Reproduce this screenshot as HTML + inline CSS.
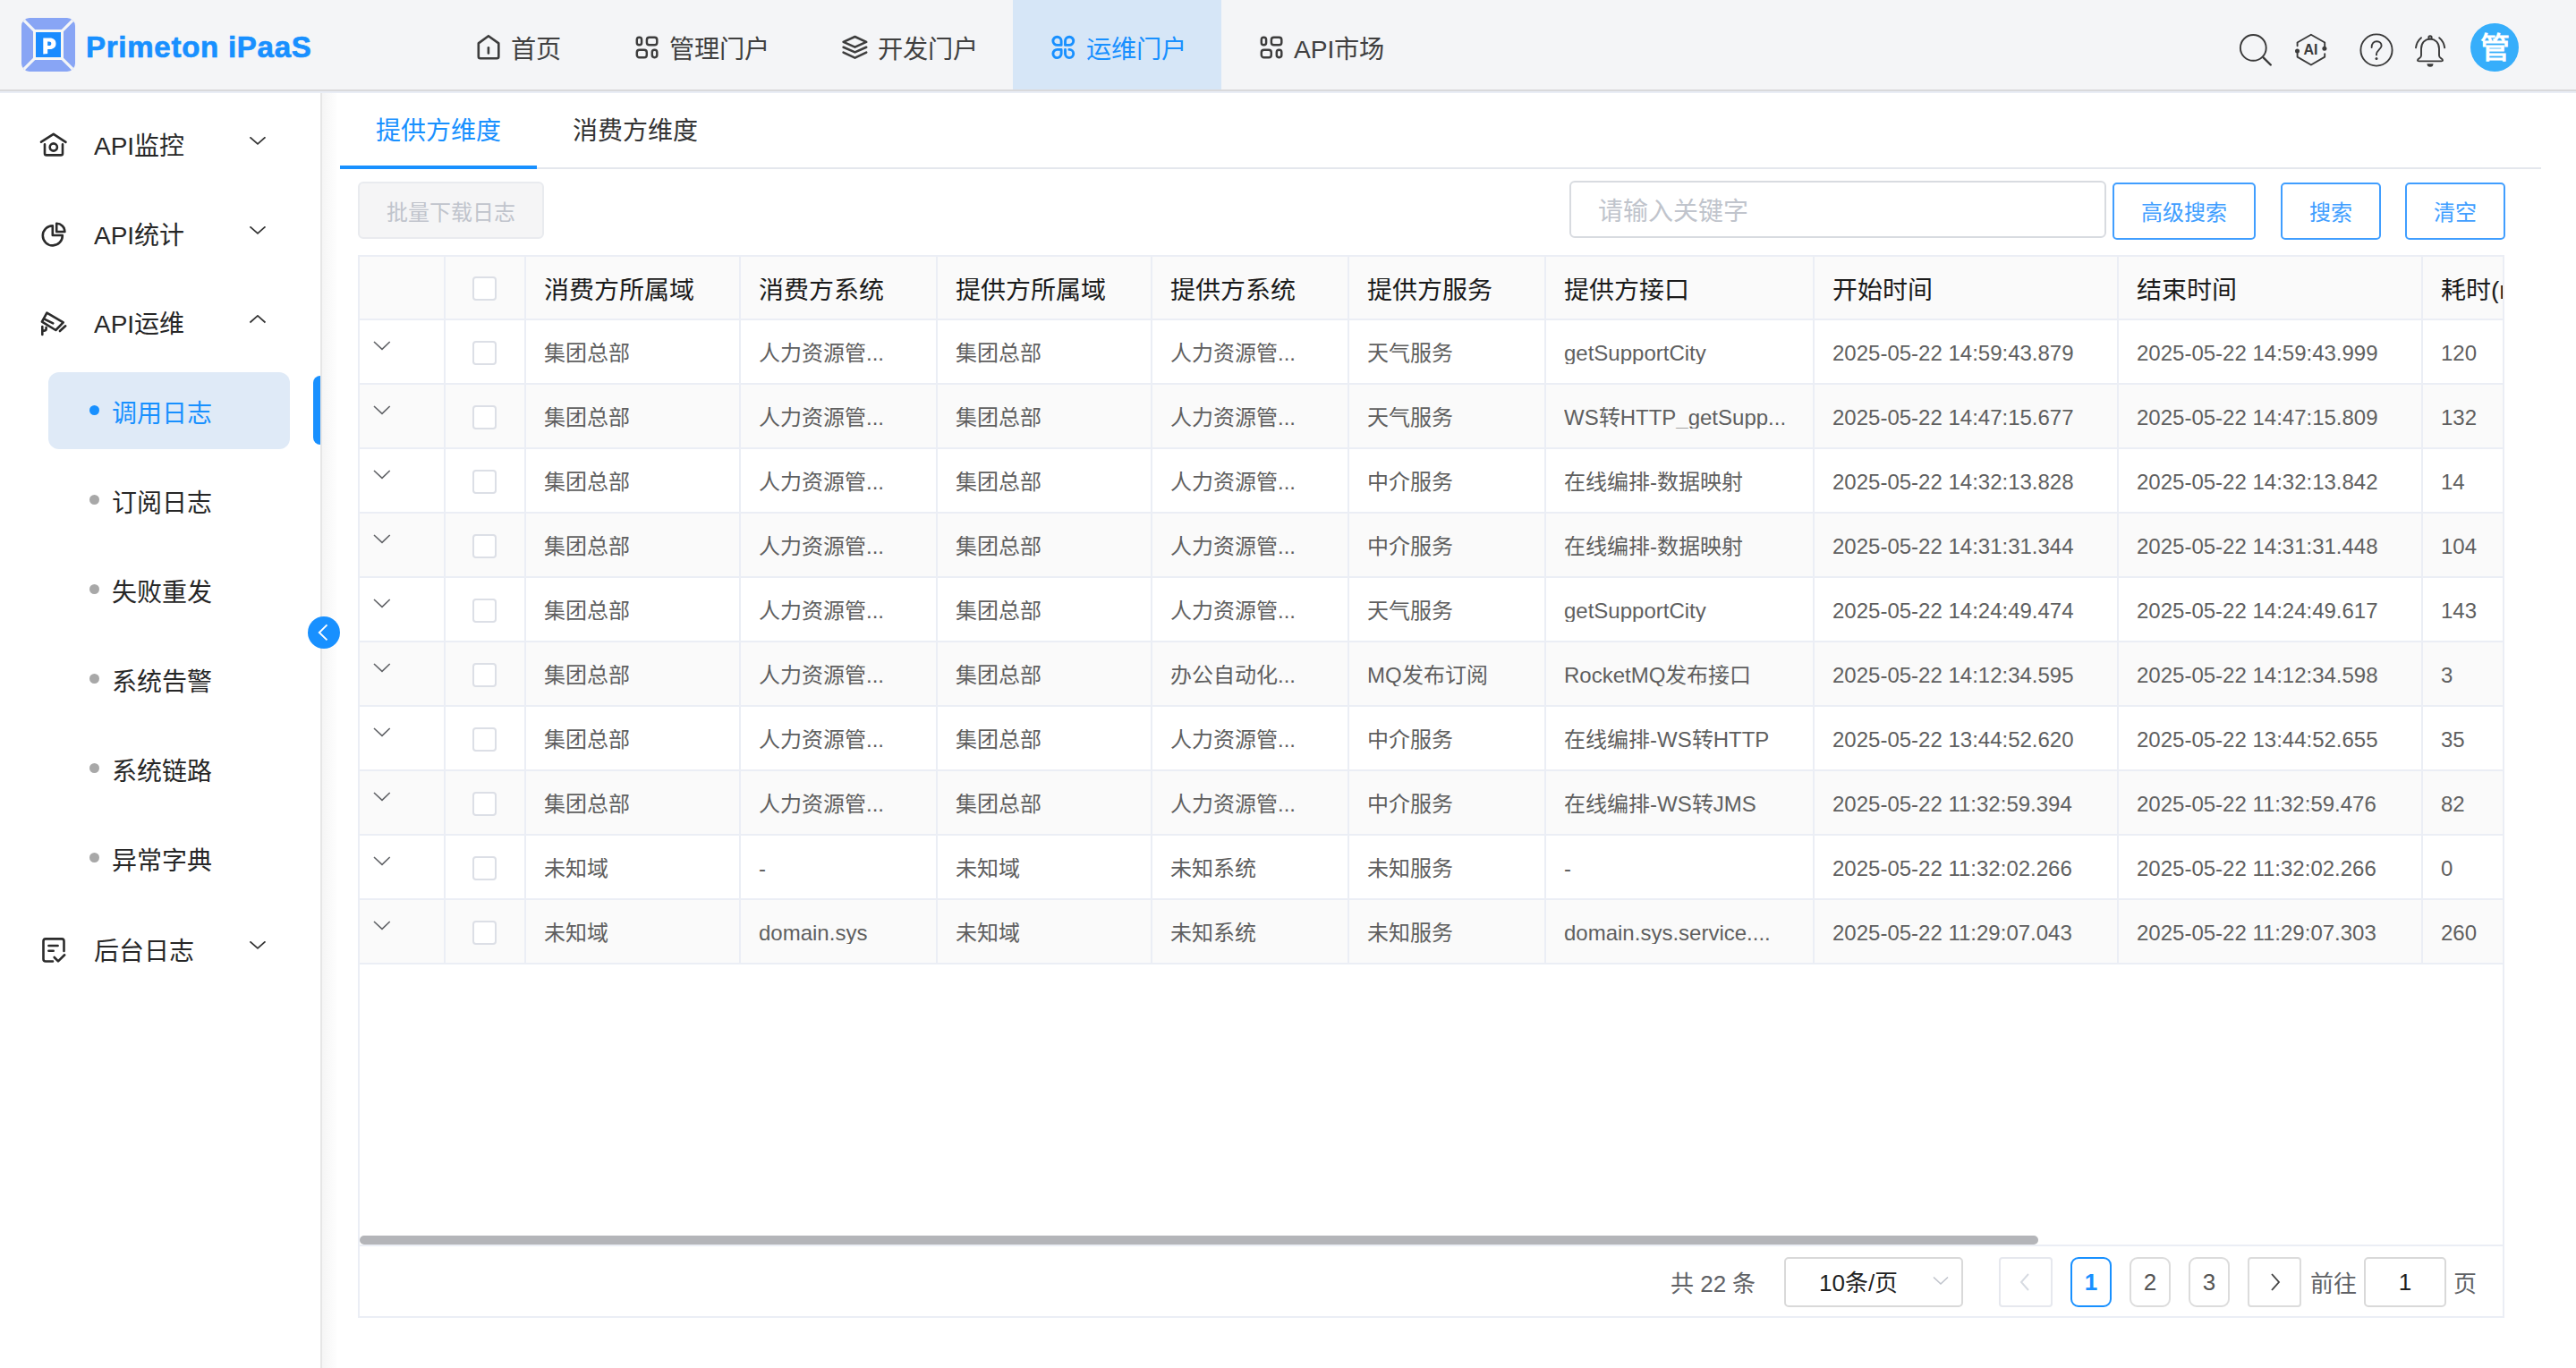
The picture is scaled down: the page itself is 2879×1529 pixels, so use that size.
<!DOCTYPE html><html lang="zh-CN"><head><meta charset="utf-8"><title>Primeton iPaaS</title><style>
*{box-sizing:border-box;margin:0;padding:0}
html,body{width:2879px;height:1529px;overflow:hidden;background:#fff}
body{font-family:"Liberation Sans",sans-serif;color:#333;position:relative}
.abs{position:absolute}
#hdr{left:0;top:0;width:2879px;height:102px;background:#f4f5f7;border-bottom:2px solid #d9d9db;box-shadow:0 2px 0 #e9edf5;z-index:2}
.nav{position:absolute;top:2px;height:100px;display:flex;align-items:center;font-size:28.2px;color:#404040;white-space:nowrap}
.nav svg{position:absolute}
#side{left:0;top:102px;width:360px;height:1427px;background:#fff;border-right:2px solid #e6e6e6}
#shadow{left:360px;top:102px;width:18px;height:1427px;background:linear-gradient(to right,#f5f5f5,rgba(255,255,255,0))}
.mi{position:absolute;left:105px;margin-top:2px;font-size:28px;color:#262626;line-height:28px;white-space:nowrap}
.si{position:absolute;left:125px;margin-top:2px;font-size:28px;color:#262626;line-height:28px;white-space:nowrap}
.dot{position:absolute;left:100px;width:11px;height:11px;border-radius:50%;background:#a8a8a8}
.cell{position:absolute;white-space:nowrap;overflow:hidden}
.ht{font-size:28px;color:#1b1b1b;line-height:28px}
.rt{font-size:24px;color:#5f5f5f;line-height:24px}
.vl{position:absolute;width:2px;background:#ebeef5}
.hl{position:absolute;height:2px;background:#ebeef5}
.cb{position:absolute;left:528px;width:27px;height:27px;border:2px solid #dcdfe6;border-radius:4px;background:#fff}
.btn{position:absolute;top:204px;height:64px;padding-bottom:2px;border:2px solid #409eff;border-radius:5px;color:#409eff;font-size:24px;display:flex;align-items:center;justify-content:center;background:#fff}
.pg{position:absolute;top:1405px;height:56px;border:2px solid #dcdcdc;border-radius:9px;display:flex;align-items:center;justify-content:center;font-size:26px;color:#555;background:#fff}
</style></head><body>
<div id="hdr" class="abs">
<svg class="abs" style="left:24px;top:20px" width="60" height="60" viewBox="0 0 60 60">
<defs><clipPath id="lc"><rect x="0" y="0" width="60" height="60" rx="9"/></clipPath></defs>
<g clip-path="url(#lc)"><rect x="0" y="0" width="60" height="60" fill="#88a5f5"/>
<line x1="0" y1="0" x2="60" y2="60" stroke="#f4f5f7" stroke-width="3.2"/>
<line x1="60" y1="0" x2="0" y2="60" stroke="#f4f5f7" stroke-width="3.2"/></g>
<rect x="13" y="13" width="34" height="34" fill="#f7f7f5"/>
<rect x="16" y="16" width="28" height="28" fill="#1a8cff"/>
<path d="M24.3 22.6h7.2c4.6 0 7 2.3 7 6.1c0 3.9-2.6 6.3-6.7 6.3h-2.6v5l-4.9 0.6zM29.2 26.5v4.6h1.7c1.4 0 2.4-0.8 2.4-2.3c0-1.5-0.9-2.3-2.4-2.3z" fill="#fff"/>
</svg>
<div class="abs" style="left:96px;top:33px;font-size:33px;font-weight:bold;color:#1890ff;line-height:40px;white-space:nowrap;letter-spacing:0.75px;-webkit-text-stroke:0.7px #1890ff">Primeton iPaaS</div>
<div class="abs" style="left:1132px;top:0;width:233px;height:100px;background:#d6e6f7"></div>
<svg class="abs" style="left:526px;top:32px" width="40" height="40" viewBox="0 0 40 40"><path d="M8.8 16.4 L19.9 8.2 L31.3 16.4 V31.3 Q31.3 33.3 29.3 33.3 H10.8 Q8.8 33.3 8.8 31.3 Z" fill="none" stroke="#3d3d3d" stroke-width="2.6" stroke-linecap="round" stroke-linejoin="round"/><path d="M19.9 21.3 V27.5" fill="none" stroke="#3d3d3d" stroke-width="2.6" stroke-linecap="round" stroke-linejoin="round"/></svg>
<div class="nav" style="left:571px">首页</div>
<svg class="abs" style="left:703px;top:32px" width="40" height="40" viewBox="0 0 40 40"><rect x="8.8" y="9.7" width="5.3" height="8.6" rx="2.6" fill="none" stroke="#3d3d3d" stroke-width="2.45"/><rect x="19.9" y="9.7" width="11.4" height="8.6" rx="2.8" fill="none" stroke="#3d3d3d" stroke-width="2.45"/><rect x="8.8" y="23.7" width="11" height="8.5" rx="2.8" fill="none" stroke="#3d3d3d" stroke-width="2.45"/><rect x="25.8" y="23.7" width="5.5" height="8.5" rx="2.6" fill="none" stroke="#3d3d3d" stroke-width="2.45"/></svg>
<div class="nav" style="left:748px">管理门户</div>
<svg class="abs" style="left:935px;top:32px" width="40" height="40" viewBox="0 0 40 40"><path d="M20.5 9 L33.2 14.9 L20.5 20.6 L7.6 14.9 Z" fill="none" stroke="#3d3d3d" stroke-width="2.6" stroke-linecap="round" stroke-linejoin="round"/><path d="M7.6 20.8 L20.5 26.4 L33.2 20.8" fill="none" stroke="#3d3d3d" stroke-width="2.6" stroke-linecap="round" stroke-linejoin="round"/><path d="M7.6 26.6 L20.5 32.6 L33.2 26.6" fill="none" stroke="#3d3d3d" stroke-width="2.6" stroke-linecap="round" stroke-linejoin="round"/></svg>
<div class="nav" style="left:981px">开发门户</div>
<svg class="abs" style="left:1168px;top:32px" width="40" height="40" viewBox="0 0 40 40">
<path d="M18.1 18.4 H13.7 A4.6 4.6 0 1 1 18.1 13.8 Z" fill="none" stroke="#1890ff" stroke-width="2.9" stroke-linejoin="round"/>
<path d="M22.5 18.4 H26.9 A4.6 4.6 0 1 0 22.5 13.8 Z" fill="none" stroke="#1890ff" stroke-width="2.9" stroke-linejoin="round"/>
<path d="M18.1 23.4 H13.7 A4.6 4.6 0 1 0 18.1 28 Z" fill="none" stroke="#1890ff" stroke-width="2.9" stroke-linejoin="round"/>
<path d="M22.5 23.4 V28 A4.6 4.6 0 1 0 27.1 23.4 H26.9" fill="none" stroke="#1890ff" stroke-width="2.9" stroke-linejoin="round" stroke-linecap="round"/>
</svg>
<div class="nav" style="left:1214px;color:#1890ff">运维门户</div>
<svg class="abs" style="left:1401px;top:32px" width="40" height="40" viewBox="0 0 40 40"><rect x="8.8" y="9.7" width="5.3" height="8.6" rx="2.6" fill="none" stroke="#3d3d3d" stroke-width="2.45"/><rect x="19.9" y="9.7" width="11.4" height="8.6" rx="2.8" fill="none" stroke="#3d3d3d" stroke-width="2.45"/><rect x="8.8" y="23.7" width="11" height="8.5" rx="2.8" fill="none" stroke="#3d3d3d" stroke-width="2.45"/><rect x="25.8" y="23.7" width="5.5" height="8.5" rx="2.6" fill="none" stroke="#3d3d3d" stroke-width="2.45"/></svg>
<div class="nav" style="left:1446px">API市场</div>
<svg class="abs" style="left:2496px;top:30px" width="50" height="50" viewBox="0 0 50 50"><circle cx="22.3" cy="23.4" r="14.4" fill="none" stroke="#3a3a3a" stroke-width="1.9" stroke-linecap="round" stroke-linejoin="round"/><path d="M33.6 34.3 L41.8 42.5" fill="none" stroke="#3a3a3a" stroke-width="2.4" stroke-linecap="round"/></svg>
<svg class="abs" style="left:2558px;top:30px" width="50" height="50" viewBox="0 0 50 50">
<path d="M9.6 21.2 V17.5 L24.9 8.7 L40.2 17.5 V22.2" fill="none" stroke="#3a3a3a" stroke-width="1.9" stroke-linecap="round" stroke-linejoin="round"/>
<path d="M40.2 30.2 V33.6 L24.9 42.5 L9.6 33.6 V28.2" fill="none" stroke="#3a3a3a" stroke-width="1.9" stroke-linecap="round" stroke-linejoin="round"/>
<circle cx="39.9" cy="24.2" r="2.5" fill="#3a3a3a"/><circle cx="9.5" cy="27" r="2.5" fill="#3a3a3a"/>
<text x="24.5" y="30.8" text-anchor="middle" font-family="Liberation Sans" font-weight="bold" font-size="16" fill="#3a3a3a">AI</text>
</svg>
<svg class="abs" style="left:2630px;top:30px" width="50" height="50" viewBox="0 0 50 50">
<circle cx="26" cy="26" r="17.6" fill="none" stroke="#3a3a3a" stroke-width="1.9" stroke-linecap="round" stroke-linejoin="round"/>
<path d="M20.6 23 C20.6 18.6 23.2 16.3 26.4 16.3 C29.6 16.3 31.6 18.4 31.6 21.2 C31.6 24.6 26 26.4 26 30.6 V31.4" fill="none" stroke="#3a3a3a" stroke-width="1.9" stroke-linecap="round" stroke-linejoin="round" stroke-width="2.1"/>
<circle cx="26" cy="35.6" r="1.5" fill="#3a3a3a"/>
</svg>
<svg class="abs" style="left:2692px;top:30px" width="50" height="50" viewBox="0 0 50 50">
<path d="M24 13.6 C18 13.6 14 18.2 14 24.4 V32 C14 33.6 13 34.6 11.6 35.4 C9.6 36.6 9.4 38.4 11.6 38.4 H36.4 C38.6 38.4 38.4 36.6 36.4 35.4 C35 34.6 34 33.6 34 32 V24.4 C34 18.2 30 13.6 24 13.6 Z" fill="none" stroke="#3a3a3a" stroke-width="1.9" stroke-linecap="round" stroke-linejoin="round"/>
<circle cx="24" cy="11.9" r="1.7" fill="none" stroke="#3a3a3a" stroke-width="1.9" stroke-linecap="round" stroke-linejoin="round"/>
<path d="M20.5 41.2 H27.5 A3.5 3.5 0 0 1 20.5 41.2 Z" fill="#3a3a3a"/>
<path d="M14 12.2 C10.6 15 8.6 18.6 8 23.4" fill="none" stroke="#3a3a3a" stroke-width="1.9" stroke-linecap="round" stroke-linejoin="round"/><path d="M34.2 12.2 C37.6 15 39.6 18.6 40.2 23.4" fill="none" stroke="#3a3a3a" stroke-width="1.9" stroke-linecap="round" stroke-linejoin="round"/>
</svg>
<div class="abs" style="left:2761px;top:26px;width:54px;height:54px;border-radius:50%;background:#36aefb;color:#fff;font-size:33px;font-weight:bold;display:flex;align-items:center;justify-content:center;line-height:1">管</div>
</div>
<div id="side" class="abs"></div><div id="shadow" class="abs"></div>
<svg class="abs" style="left:36px;top:140px" width="50" height="45" viewBox="0 0 50 45"><path d="M10 18.7 L23.8 9.9 L37.5 18.9" fill="none" stroke="#2b2b2b" stroke-width="2.6" stroke-linecap="round" stroke-linejoin="round"/><path d="M14 21.4 V31.4 Q14 33.4 16 33.4 H32 Q34 33.4 34 31.4 V21.4" fill="none" stroke="#2b2b2b" stroke-width="2.6" stroke-linecap="round" stroke-linejoin="round"/><circle cx="23.8" cy="24.5" r="4.1" fill="none" stroke="#2b2b2b" stroke-width="2.6" stroke-linecap="round" stroke-linejoin="round" stroke-width="2.4"/></svg>
<div class="mi" style="top:148px">API监控</div>
<svg class="abs" style="left:36px;top:240px" width="50" height="45" viewBox="0 0 50 45"><path d="M22.8 12.4 A11 11 0 1 0 33.8 23 H22.8 Z" fill="none" stroke="#2b2b2b" stroke-width="2.6" stroke-linecap="round" stroke-linejoin="round" stroke-linecap="butt" stroke-linejoin="miter"/><path d="M27.2 9.8 V19 H36.4 A9.2 9.2 0 0 0 27.2 9.8 Z" fill="none" stroke="#2b2b2b" stroke-width="2.6" stroke-linecap="round" stroke-linejoin="round" stroke-linecap="butt" stroke-linejoin="miter"/></svg>
<div class="mi" style="top:248px">API统计</div>
<svg class="abs" style="left:36px;top:340px" width="50" height="45" viewBox="0 0 50 45"><path d="M16.4 9.6 L34.7 20.4 L26.3 29 L10.9 19.7 Z" fill="none" stroke="#2b2b2b" stroke-width="2.6" stroke-linecap="round" stroke-linejoin="round"/><path d="M13.6 16.6 L23.3 21.3" fill="none" stroke="#2b2b2b" stroke-width="2.6" stroke-linecap="round" stroke-linejoin="round"/><path d="M30.9 30 L37.2 24.3" fill="none" stroke="#2b2b2b" stroke-width="2.6" stroke-linecap="round" stroke-linejoin="round"/><path d="M11.3 25 V34" fill="none" stroke="#2b2b2b" stroke-width="2.6" stroke-linecap="round" stroke-linejoin="round"/><path d="M11.3 29.6 H13.6 Q15.6 29.6 15.6 27.6 V26" fill="none" stroke="#2b2b2b" stroke-width="2.6" stroke-linecap="round" stroke-linejoin="round"/></svg>
<div class="mi" style="top:347px">API运维</div>
<svg class="abs" style="left:276px;top:153px" width="24" height="12" viewBox="0 0 24 12"><path d="M3.4 0.3 L12 7.9 L20.5 0.3" fill="none" stroke="#333" stroke-width="1.7"/></svg>
<svg class="abs" style="left:276px;top:253px" width="24" height="12" viewBox="0 0 24 12"><path d="M3.4 0.3 L12 7.9 L20.5 0.3" fill="none" stroke="#333" stroke-width="1.7"/></svg>
<svg class="abs" style="left:276px;top:352px" width="24" height="12" viewBox="0 0 24 12"><path d="M3.4 8.5 L12 0.9 L20.5 8.5" fill="none" stroke="#333" stroke-width="1.7"/></svg>
<svg class="abs" style="left:276px;top:1052px" width="24" height="12" viewBox="0 0 24 12"><path d="M3.4 0.3 L12 7.9 L20.5 0.3" fill="none" stroke="#333" stroke-width="1.7"/></svg>
<div class="abs" style="left:54px;top:416px;width:270px;height:86px;border-radius:12px;background:#dfeaf7"></div>
<div class="abs" style="left:350px;top:420px;width:8px;height:77px;border-radius:8px 0 0 8px;background:#1890ff"></div>
<div class="dot" style="top:453px;background:#1890ff"></div>
<div class="si" style="top:447px;color:#1890ff">调用日志</div>
<div class="dot" style="top:553px"></div>
<div class="si" style="top:547px">订阅日志</div>
<div class="dot" style="top:653px"></div>
<div class="si" style="top:647px">失败重发</div>
<div class="dot" style="top:753px"></div>
<div class="si" style="top:747px">系统告警</div>
<div class="dot" style="top:853px"></div>
<div class="si" style="top:847px">系统链路</div>
<div class="dot" style="top:953px"></div>
<div class="si" style="top:947px">异常字典</div>
<svg class="abs" style="left:36px;top:1040px" width="50" height="45" viewBox="0 0 50 45"><path d="M23 34.5 H15 Q12.5 34.5 12.5 32 V11.9 Q12.5 9.4 15 9.4 H33 Q35.5 9.4 35.5 11.9 V23" fill="none" stroke="#2b2b2b" stroke-width="2.6" stroke-linecap="round" stroke-linejoin="round"/><path d="M18.4 17 H28.6" fill="none" stroke="#2b2b2b" stroke-width="2.6" stroke-linecap="round" stroke-linejoin="round"/><path d="M18.4 22.7 H23.7" fill="none" stroke="#2b2b2b" stroke-width="2.6" stroke-linecap="round" stroke-linejoin="round"/><path d="M24.7 30 L29 34.4 L36.2 27.3" fill="none" stroke="#2b2b2b" stroke-width="2.6" stroke-linecap="round" stroke-linejoin="round"/></svg>
<div class="mi" style="top:1048px">后台日志</div>
<svg class="abs" style="left:344px;top:689px" width="36" height="36" viewBox="0 0 36 36"><circle cx="18" cy="18" r="18" fill="#1890ff"/><path d="M21.5 9.4 L12.8 18 L21.5 26.4" fill="none" stroke="#fff" stroke-width="1.9"/></svg>
<div class="abs" style="left:420px;top:133px;font-size:28px;line-height:28px;color:#1890ff;white-space:nowrap">提供方维度</div>
<div class="abs" style="left:640px;top:133px;font-size:28px;line-height:28px;color:#333;white-space:nowrap">消费方维度</div>
<div class="hl" style="left:380px;top:187px;width:2460px;background:#e4e7ed"></div>
<div class="abs" style="left:380px;top:185px;width:220px;height:4px;background:#1890ff"></div>
<div class="abs" style="left:400px;top:203px;width:208px;height:64px;border:2px solid #e9ebef;border-radius:6px;background:#f5f5f6;color:#c0c4cc;font-size:24px;display:flex;align-items:center;justify-content:center">批量下载日志</div>
<div class="abs" style="left:1754px;top:202px;width:600px;height:64px;border:2px solid #d8dbe0;border-radius:6px;background:#fff"></div>
<div class="abs" style="left:1786px;top:223px;font-size:28px;line-height:28px;color:#c0c4cc;white-space:nowrap">请输入关键字</div>
<div class="btn" style="left:2361px;width:160px">高级搜索</div>
<div class="btn" style="left:2549px;width:112px">搜索</div>
<div class="btn" style="left:2688px;width:112px">清空</div>
<div class="abs" style="left:400px;top:285px;width:2399px;height:1188px;border:2px solid #ebeef5;border-right:none"></div>
<div class="vl" style="left:2797px;top:285px;height:1187px"></div>
<div class="abs" style="left:402px;top:287px;width:2395px;height:70px;background:#fafafa"></div>
<div class="abs" style="left:402px;top:429px;width:2395px;height:72px;background:#fafafa"></div>
<div class="abs" style="left:402px;top:573px;width:2395px;height:72px;background:#fafafa"></div>
<div class="abs" style="left:402px;top:717px;width:2395px;height:72px;background:#fafafa"></div>
<div class="abs" style="left:402px;top:861px;width:2395px;height:72px;background:#fafafa"></div>
<div class="abs" style="left:402px;top:1005px;width:2395px;height:72px;background:#fafafa"></div>
<div class="hl" style="left:400px;top:356px;width:2399px"></div>
<div class="hl" style="left:400px;top:428px;width:2399px"></div>
<div class="hl" style="left:400px;top:500px;width:2399px"></div>
<div class="hl" style="left:400px;top:572px;width:2399px"></div>
<div class="hl" style="left:400px;top:644px;width:2399px"></div>
<div class="hl" style="left:400px;top:716px;width:2399px"></div>
<div class="hl" style="left:400px;top:788px;width:2399px"></div>
<div class="hl" style="left:400px;top:860px;width:2399px"></div>
<div class="hl" style="left:400px;top:932px;width:2399px"></div>
<div class="hl" style="left:400px;top:1004px;width:2399px"></div>
<div class="hl" style="left:400px;top:1076px;width:2399px"></div>
<div class="vl" style="left:496px;top:285px;height:792px"></div>
<div class="vl" style="left:586px;top:285px;height:792px"></div>
<div class="vl" style="left:826px;top:285px;height:792px"></div>
<div class="vl" style="left:1046px;top:285px;height:792px"></div>
<div class="vl" style="left:1286px;top:285px;height:792px"></div>
<div class="vl" style="left:1506px;top:285px;height:792px"></div>
<div class="vl" style="left:1726px;top:285px;height:792px"></div>
<div class="vl" style="left:2026px;top:285px;height:792px"></div>
<div class="vl" style="left:2366px;top:285px;height:792px"></div>
<div class="vl" style="left:2706px;top:285px;height:792px"></div>
<div class="cb" style="top:309px"></div>
<div class="cell ht" style="left:608px;top:311px;width:218px">消费方所属域</div>
<div class="cell ht" style="left:848px;top:311px;width:198px">消费方系统</div>
<div class="cell ht" style="left:1068px;top:311px;width:218px">提供方所属域</div>
<div class="cell ht" style="left:1308px;top:311px;width:198px">提供方系统</div>
<div class="cell ht" style="left:1528px;top:311px;width:198px">提供方服务</div>
<div class="cell ht" style="left:1748px;top:311px;width:278px">提供方接口</div>
<div class="cell ht" style="left:2048px;top:311px;width:318px">开始时间</div>
<div class="cell ht" style="left:2388px;top:311px;width:318px">结束时间</div>
<div class="cell ht" style="left:2728px;top:311px;width:69px">耗时(ms)</div>
<svg class="abs" style="left:414px;top:379px" width="26" height="14" viewBox="0 0 26 14"><path d="M4 3 L13 11.4 L21.7 3" fill="none" stroke="#606266" stroke-width="1.6"/></svg>
<div class="cb" style="top:381px"></div>
<div class="cell rt" style="left:608px;top:383px;width:218px">集团总部</div>
<div class="cell rt" style="left:848px;top:383px;width:198px">人力资源管...</div>
<div class="cell rt" style="left:1068px;top:383px;width:218px">集团总部</div>
<div class="cell rt" style="left:1308px;top:383px;width:198px">人力资源管...</div>
<div class="cell rt" style="left:1528px;top:383px;width:198px">天气服务</div>
<div class="cell rt" style="left:1748px;top:383px;width:278px">getSupportCity</div>
<div class="cell rt" style="left:2048px;top:383px;width:318px">2025-05-22 14:59:43.879</div>
<div class="cell rt" style="left:2388px;top:383px;width:318px">2025-05-22 14:59:43.999</div>
<div class="cell rt" style="left:2728px;top:383px;width:69px">120</div>
<svg class="abs" style="left:414px;top:451px" width="26" height="14" viewBox="0 0 26 14"><path d="M4 3 L13 11.4 L21.7 3" fill="none" stroke="#606266" stroke-width="1.6"/></svg>
<div class="cb" style="top:453px"></div>
<div class="cell rt" style="left:608px;top:455px;width:218px">集团总部</div>
<div class="cell rt" style="left:848px;top:455px;width:198px">人力资源管...</div>
<div class="cell rt" style="left:1068px;top:455px;width:218px">集团总部</div>
<div class="cell rt" style="left:1308px;top:455px;width:198px">人力资源管...</div>
<div class="cell rt" style="left:1528px;top:455px;width:198px">天气服务</div>
<div class="cell rt" style="left:1748px;top:455px;width:278px">WS转HTTP_getSupp...</div>
<div class="cell rt" style="left:2048px;top:455px;width:318px">2025-05-22 14:47:15.677</div>
<div class="cell rt" style="left:2388px;top:455px;width:318px">2025-05-22 14:47:15.809</div>
<div class="cell rt" style="left:2728px;top:455px;width:69px">132</div>
<svg class="abs" style="left:414px;top:523px" width="26" height="14" viewBox="0 0 26 14"><path d="M4 3 L13 11.4 L21.7 3" fill="none" stroke="#606266" stroke-width="1.6"/></svg>
<div class="cb" style="top:525px"></div>
<div class="cell rt" style="left:608px;top:527px;width:218px">集团总部</div>
<div class="cell rt" style="left:848px;top:527px;width:198px">人力资源管...</div>
<div class="cell rt" style="left:1068px;top:527px;width:218px">集团总部</div>
<div class="cell rt" style="left:1308px;top:527px;width:198px">人力资源管...</div>
<div class="cell rt" style="left:1528px;top:527px;width:198px">中介服务</div>
<div class="cell rt" style="left:1748px;top:527px;width:278px">在线编排-数据映射</div>
<div class="cell rt" style="left:2048px;top:527px;width:318px">2025-05-22 14:32:13.828</div>
<div class="cell rt" style="left:2388px;top:527px;width:318px">2025-05-22 14:32:13.842</div>
<div class="cell rt" style="left:2728px;top:527px;width:69px">14</div>
<svg class="abs" style="left:414px;top:595px" width="26" height="14" viewBox="0 0 26 14"><path d="M4 3 L13 11.4 L21.7 3" fill="none" stroke="#606266" stroke-width="1.6"/></svg>
<div class="cb" style="top:597px"></div>
<div class="cell rt" style="left:608px;top:599px;width:218px">集团总部</div>
<div class="cell rt" style="left:848px;top:599px;width:198px">人力资源管...</div>
<div class="cell rt" style="left:1068px;top:599px;width:218px">集团总部</div>
<div class="cell rt" style="left:1308px;top:599px;width:198px">人力资源管...</div>
<div class="cell rt" style="left:1528px;top:599px;width:198px">中介服务</div>
<div class="cell rt" style="left:1748px;top:599px;width:278px">在线编排-数据映射</div>
<div class="cell rt" style="left:2048px;top:599px;width:318px">2025-05-22 14:31:31.344</div>
<div class="cell rt" style="left:2388px;top:599px;width:318px">2025-05-22 14:31:31.448</div>
<div class="cell rt" style="left:2728px;top:599px;width:69px">104</div>
<svg class="abs" style="left:414px;top:667px" width="26" height="14" viewBox="0 0 26 14"><path d="M4 3 L13 11.4 L21.7 3" fill="none" stroke="#606266" stroke-width="1.6"/></svg>
<div class="cb" style="top:669px"></div>
<div class="cell rt" style="left:608px;top:671px;width:218px">集团总部</div>
<div class="cell rt" style="left:848px;top:671px;width:198px">人力资源管...</div>
<div class="cell rt" style="left:1068px;top:671px;width:218px">集团总部</div>
<div class="cell rt" style="left:1308px;top:671px;width:198px">人力资源管...</div>
<div class="cell rt" style="left:1528px;top:671px;width:198px">天气服务</div>
<div class="cell rt" style="left:1748px;top:671px;width:278px">getSupportCity</div>
<div class="cell rt" style="left:2048px;top:671px;width:318px">2025-05-22 14:24:49.474</div>
<div class="cell rt" style="left:2388px;top:671px;width:318px">2025-05-22 14:24:49.617</div>
<div class="cell rt" style="left:2728px;top:671px;width:69px">143</div>
<svg class="abs" style="left:414px;top:739px" width="26" height="14" viewBox="0 0 26 14"><path d="M4 3 L13 11.4 L21.7 3" fill="none" stroke="#606266" stroke-width="1.6"/></svg>
<div class="cb" style="top:741px"></div>
<div class="cell rt" style="left:608px;top:743px;width:218px">集团总部</div>
<div class="cell rt" style="left:848px;top:743px;width:198px">人力资源管...</div>
<div class="cell rt" style="left:1068px;top:743px;width:218px">集团总部</div>
<div class="cell rt" style="left:1308px;top:743px;width:198px">办公自动化...</div>
<div class="cell rt" style="left:1528px;top:743px;width:198px">MQ发布订阅</div>
<div class="cell rt" style="left:1748px;top:743px;width:278px">RocketMQ发布接口</div>
<div class="cell rt" style="left:2048px;top:743px;width:318px">2025-05-22 14:12:34.595</div>
<div class="cell rt" style="left:2388px;top:743px;width:318px">2025-05-22 14:12:34.598</div>
<div class="cell rt" style="left:2728px;top:743px;width:69px">3</div>
<svg class="abs" style="left:414px;top:811px" width="26" height="14" viewBox="0 0 26 14"><path d="M4 3 L13 11.4 L21.7 3" fill="none" stroke="#606266" stroke-width="1.6"/></svg>
<div class="cb" style="top:813px"></div>
<div class="cell rt" style="left:608px;top:815px;width:218px">集团总部</div>
<div class="cell rt" style="left:848px;top:815px;width:198px">人力资源管...</div>
<div class="cell rt" style="left:1068px;top:815px;width:218px">集团总部</div>
<div class="cell rt" style="left:1308px;top:815px;width:198px">人力资源管...</div>
<div class="cell rt" style="left:1528px;top:815px;width:198px">中介服务</div>
<div class="cell rt" style="left:1748px;top:815px;width:278px">在线编排-WS转HTTP</div>
<div class="cell rt" style="left:2048px;top:815px;width:318px">2025-05-22 13:44:52.620</div>
<div class="cell rt" style="left:2388px;top:815px;width:318px">2025-05-22 13:44:52.655</div>
<div class="cell rt" style="left:2728px;top:815px;width:69px">35</div>
<svg class="abs" style="left:414px;top:883px" width="26" height="14" viewBox="0 0 26 14"><path d="M4 3 L13 11.4 L21.7 3" fill="none" stroke="#606266" stroke-width="1.6"/></svg>
<div class="cb" style="top:885px"></div>
<div class="cell rt" style="left:608px;top:887px;width:218px">集团总部</div>
<div class="cell rt" style="left:848px;top:887px;width:198px">人力资源管...</div>
<div class="cell rt" style="left:1068px;top:887px;width:218px">集团总部</div>
<div class="cell rt" style="left:1308px;top:887px;width:198px">人力资源管...</div>
<div class="cell rt" style="left:1528px;top:887px;width:198px">中介服务</div>
<div class="cell rt" style="left:1748px;top:887px;width:278px">在线编排-WS转JMS</div>
<div class="cell rt" style="left:2048px;top:887px;width:318px">2025-05-22 11:32:59.394</div>
<div class="cell rt" style="left:2388px;top:887px;width:318px">2025-05-22 11:32:59.476</div>
<div class="cell rt" style="left:2728px;top:887px;width:69px">82</div>
<svg class="abs" style="left:414px;top:955px" width="26" height="14" viewBox="0 0 26 14"><path d="M4 3 L13 11.4 L21.7 3" fill="none" stroke="#606266" stroke-width="1.6"/></svg>
<div class="cb" style="top:957px"></div>
<div class="cell rt" style="left:608px;top:959px;width:218px">未知域</div>
<div class="cell rt" style="left:848px;top:959px;width:198px">-</div>
<div class="cell rt" style="left:1068px;top:959px;width:218px">未知域</div>
<div class="cell rt" style="left:1308px;top:959px;width:198px">未知系统</div>
<div class="cell rt" style="left:1528px;top:959px;width:198px">未知服务</div>
<div class="cell rt" style="left:1748px;top:959px;width:278px">-</div>
<div class="cell rt" style="left:2048px;top:959px;width:318px">2025-05-22 11:32:02.266</div>
<div class="cell rt" style="left:2388px;top:959px;width:318px">2025-05-22 11:32:02.266</div>
<div class="cell rt" style="left:2728px;top:959px;width:69px">0</div>
<svg class="abs" style="left:414px;top:1027px" width="26" height="14" viewBox="0 0 26 14"><path d="M4 3 L13 11.4 L21.7 3" fill="none" stroke="#606266" stroke-width="1.6"/></svg>
<div class="cb" style="top:1029px"></div>
<div class="cell rt" style="left:608px;top:1031px;width:218px">未知域</div>
<div class="cell rt" style="left:848px;top:1031px;width:198px">domain.sys</div>
<div class="cell rt" style="left:1068px;top:1031px;width:218px">未知域</div>
<div class="cell rt" style="left:1308px;top:1031px;width:198px">未知系统</div>
<div class="cell rt" style="left:1528px;top:1031px;width:198px">未知服务</div>
<div class="cell rt" style="left:1748px;top:1031px;width:278px">domain.sys.service....</div>
<div class="cell rt" style="left:2048px;top:1031px;width:318px">2025-05-22 11:29:07.043</div>
<div class="cell rt" style="left:2388px;top:1031px;width:318px">2025-05-22 11:29:07.303</div>
<div class="cell rt" style="left:2728px;top:1031px;width:69px">260</div>
<div class="abs" style="left:402px;top:1381px;width:1876px;height:10px;border-radius:5px;background:#b4b5b9"></div>
<div class="hl" style="left:400px;top:1391px;width:2399px"></div>
<div class="abs" style="left:1867px;top:1421px;font-size:26px;line-height:28px;color:#606266;white-space:nowrap">共 22 条</div>
<div class="abs" style="left:1994px;top:1405px;width:200px;height:56px;border:2px solid #d9d9d9;border-radius:5px;background:#fff"></div>
<div class="abs" style="left:2033px;top:1420px;font-size:26px;line-height:28px;color:#1f1f1f;white-space:nowrap">10条/页</div>
<svg class="abs" style="left:2158px;top:1425px" width="22" height="14" viewBox="0 0 22 14"><path d="M3 2.5 L11 10 L19 2.5" fill="none" stroke="#c0c4cc" stroke-width="1.6"/></svg>
<div class="pg" style="left:2234px;width:60px;border-color:#e6e8ee;border-radius:4px"><svg width="20" height="24" viewBox="0 0 20 24"><path d="M13 3 L5 12 L13 21" fill="none" stroke="#d6dae1" stroke-width="1.9"/></svg></div>
<div class="pg" style="left:2314px;width:46px;border-color:#1890ff;color:#1890ff;font-weight:bold">1</div>
<div class="pg" style="left:2380px;width:46px">2</div>
<div class="pg" style="left:2446px;width:46px">3</div>
<div class="pg" style="left:2512px;width:60px;border-radius:4px;border-color:#dcdcdc"><svg width="20" height="24" viewBox="0 0 20 24"><path d="M7 3 L15 12 L7 21" fill="none" stroke="#444" stroke-width="1.8"/></svg></div>
<div class="abs" style="left:2582px;top:1421px;font-size:26px;line-height:28px;color:#606266;white-space:nowrap">前往</div>
<div class="abs" style="left:2642px;top:1405px;width:92px;height:56px;border:2px solid #d9d9d9;border-radius:5px;background:#fff;font-size:26px;color:#1f1f1f;display:flex;align-items:center;justify-content:center">1</div>
<div class="abs" style="left:2742px;top:1421px;font-size:26px;line-height:28px;color:#606266;white-space:nowrap">页</div>
</body></html>
